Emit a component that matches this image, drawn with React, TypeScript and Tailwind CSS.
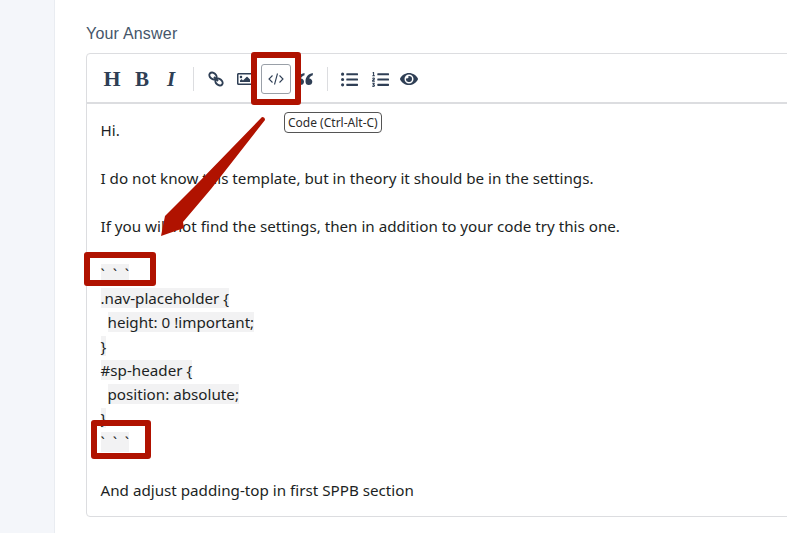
import { FaRegImage, FaListUl, FaListOl, FaEye } from "react-icons/fa";

function Code({ children, indent }: { children: string; indent?: boolean }) {
  return (
    <div className="h-6">
      {indent ? <span className="inline-block w-[7px]" /> : null}
      <span className="bg-[#f2f2f3] whitespace-pre">{children}</span>
    </div>
  );
}

export default function App() {
  return (
    <div className="relative h-[533px] w-[787px] overflow-hidden bg-white font-['Noto_Sans',sans-serif]">
      <div className="flex h-full">
        <div className="h-full w-[55px] shrink-0 border-r border-[#e9ecf1] bg-[#f4f6fa]" />
        <div className="min-w-0 flex-1 pt-[24px] pl-[31px]">
          <div className="h-[19px] font-['Liberation_Sans',sans-serif] text-[16px] leading-[19px] tracking-[0.2px] text-[#46566a]">Your Answer</div>
          <div className="mt-[10px] h-[464px] w-[760px] rounded-[4px] border border-[#dcdde0]">
            <div className="flex h-[50px] items-center border-b-2 border-[#dcdde0] pt-[2px] pl-[16px] text-[#2f3f55]">
              <span className="w-[18px] text-center font-['Liberation_Serif',serif] text-[22px] leading-none font-bold">H</span>
              <span className="ml-[14px] w-[14px] text-center font-['Liberation_Serif',serif] text-[21px] leading-none font-bold">B</span>
              <span className="ml-[16px] w-[12px] text-center font-['Liberation_Serif',serif] text-[21px] leading-none font-bold italic">I</span>
              <div className="ml-[16px] h-[24px] w-px bg-[#dcdde0]" />
              <svg className="ml-[14px]" width="16" height="16" viewBox="0 0 16 16" fill="none" stroke="currentColor" strokeWidth="2"><ellipse cx="5" cy="5" rx="4" ry="3" transform="rotate(40 5 5)" /><ellipse cx="11" cy="11" rx="4" ry="3" transform="rotate(40 11 11)" /><path d="M6 6l4 4" /></svg>
              <FaRegImage size={16} className="ml-[13px]" />
              <div className="ml-[8px] flex h-[30px] w-[30px] items-center justify-center rounded-[3px] border border-[#9aa0a8] bg-white">
                <svg width="16" height="16" viewBox="0 0 16 16" fill="none" stroke="#2f3f55" strokeWidth="1.1"><path d="M4.5 4.5 1 8l3.5 3.5M11.500 4.500 15 8l-3.500 3.500M9.500 2.500l-3 11" /></svg>
              </div>
              <svg className="ml-[6px]" width="16" height="14" viewBox="0 0 16 14" fill="currentColor"><path d="M7.500 1C3 2 .2 4.500.2 9.500c0 2.500 1.300 3.500 3.300 3.500s3.500-1.300 3.500-3.300S5.600 6.400 4 6.400C4.400 4.800 5.800 3.600 7.500 3.200zM15.800 1c-4.500 1-7.300 3.500-7.300 8.500 0 2.500 1.300 3.500 3.300 3.500s3.500-1.300 3.500-3.300-1.400-3.300-3-3.300c.4-1.600 1.800-2.800 3.500-3.200z" /></svg>
              <div className="ml-[14px] h-[24px] w-px bg-[#dcdde0]" />
              <FaListUl size={17} className="ml-[13px]" />
              <FaListOl size={17} className="ml-[14px]" />
              <FaEye size={18} className="ml-[11px]" />
            </div>
            <div className="pt-[14px] pl-[13.5px] text-[15.2px] leading-6 text-[#1c1f24]">
              <div className="h-6">Hi.</div>
              <div className="h-6" />
              <div className="h-6">I do not know this template, but in theory it should be in the settings.</div>
              <div className="h-6" />
              <div className="h-6">If you will not find the settings, then in addition to your code try this one.</div>
              <div className="h-6" />
              <Code>{"`  `  `"}</Code>
              <Code>{".nav-placeholder {"}</Code>
              <Code indent>{"height: 0 !important;"}</Code>
              <Code>{"}"}</Code>
              <Code>{"#sp-header {"}</Code>
              <Code indent>{"position: absolute;"}</Code>
              <Code>{"}"}</Code>
              <Code>{"`  `  `"}</Code>
              <div className="h-6" />
              <div className="h-6">And adjust padding-top in first SPPB section</div>
            </div>
          </div>
        </div>
      </div>
      <div className="absolute top-[112px] left-[284px] rounded-[4px] border border-[#555] bg-white px-[3px] font-['Noto_Sans',sans-serif] text-[12px] leading-[19px] text-[#2b2b2b]">Code (Ctrl-Alt-C)</div>
      <div className="absolute top-[52px] left-[251px] h-[53px] w-[50px] rounded-[3px] border-[6px] border-[#b01200]" />
      <div className="absolute top-[252px] left-[84px] h-[34px] w-[72px] rounded-[3px] border-[6px] border-[#b01200]" />
      <div className="absolute top-[420px] left-[91px] h-[39px] w-[60px] rounded-[3px] border-[6px] border-[#b01200]" />
      <svg className="absolute top-[115px] left-[160px]" width="106" height="122" viewBox="0 0 106 122">
        <path d="M102 2 Q105 2 105 5 L51 74 L23 107 L24 113 L1 121 L5 101 L36 70 Z" fill="#b01200" />
      </svg>
    </div>
  );
}
